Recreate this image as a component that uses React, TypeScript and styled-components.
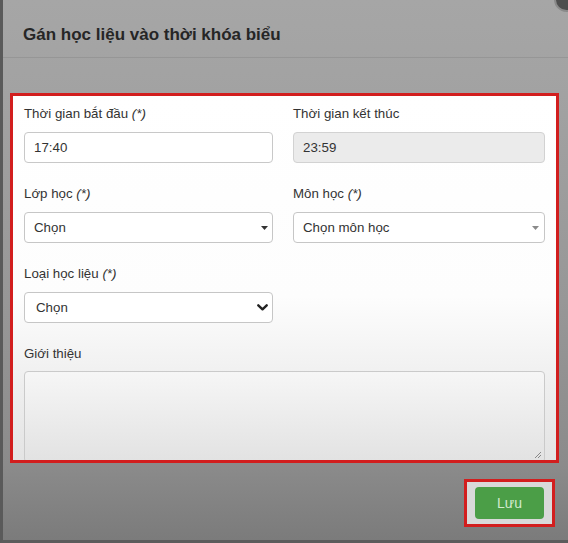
import React from "react";
import styled, { createGlobalStyle } from "styled-components";

const GlobalStyle = createGlobalStyle`
  html, body { margin: 0; padding: 0; }
  body { font-family: "Liberation Sans", Arial, sans-serif; background: #7b7b7b; }
  * { box-sizing: border-box; }
`;

const Frame = styled.div`
  position: relative;
  width: 568px;
  height: 543px;
  overflow: hidden;
  display: flex;
  flex-direction: column;
  border-left: 3px solid #5a5a5a;
  border-bottom: 3px solid #5c5c5c;
  background: linear-gradient(
    to bottom,
    #a6a6a6 0px,
    #a2a2a2 95px,
    #979797 300px,
    #8b8b8b 465px,
    #7b7b7b 540px
  );
`;

const CloseDot = styled.div`
  position: absolute;
  top: -13px;
  right: -11px;
  width: 25px;
  height: 25px;
  border-radius: 50%;
  background: #4e4e4e;
  border: 2px solid #8a8a8a;
`;

const Header = styled.div`
  height: 58px;
  padding: 25px 0 0 20px;
  border-bottom: 1px solid #969696;
`;

const Title = styled.h4`
  margin: 0;
  font-size: 17px;
  line-height: 20px;
  font-weight: bold;
  color: #262626;
`;

const Body = styled.div`
  padding: 35px 9px 0 7px;
`;

const FormBox = styled.div`
  height: 370px;
  border: 3px solid #d21e1e;
  overflow: hidden;
  padding: 8px 11px 0 11px;
  background: linear-gradient(
    to bottom,
    #ffffff 0%,
    #fdfdfd 55%,
    #eeeeee 80%,
    #e4e4e4 100%
  );
  display: grid;
  grid-template-columns: 249px 252px;
  column-gap: 20px;
  align-content: start;
`;

const Field = styled.div<{ $wide?: boolean }>`
  display: flex;
  flex-direction: column;
  margin-bottom: 21px;
  grid-column: ${(p) => (p.$wide ? "1 / span 2" : "auto")};
`;

const Label = styled.label`
  display: block;
  height: 20px;
  line-height: 20px;
  margin-bottom: 8px;
  font-size: 13.3px;
  color: #333;

  em {
    font-style: italic;
  }
`;

const TextInput = styled.div<{ $disabled?: boolean }>`
  height: 31px;
  display: flex;
  align-items: center;
  padding: 0 9px;
  border: 1px solid ${(p) => (p.$disabled ? "#d2d2d2" : "#c8c8c8")};
  border-radius: 4px;
  background: ${(p) => (p.$disabled ? "#ebebeb" : "#ffffff")};
  font-size: 13.3px;
  color: #333;
`;

const SelectBox = styled.div<{ $pad: number; $right: number }>`
  height: 31px;
  display: flex;
  align-items: center;
  justify-content: space-between;
  padding: 0 ${(p) => p.$right}px 0 ${(p) => p.$pad}px;
  border: 1px solid #c6c6c6;
  border-radius: 4px;
  background: #ffffff;
  font-size: 13.3px;
  color: #333;
`;

const TextArea = styled.div`
  position: relative;
  height: 92px;
  margin-top: -1px;
  border: 1px solid #cacaca;
  border-radius: 4px;
  background: linear-gradient(to bottom, #f6f6f6 0%, #eaeaea 60%, #e2e2e2 100%);
`;

const Grip = styled.svg`
  position: absolute;
  right: 2px;
  bottom: 3px;
`;

const Footer = styled.div`
  display: flex;
  justify-content: flex-end;
  padding: 16px 13px 0 0;
`;

const SaveFrame = styled.div`
  border: 3px solid #d21e1e;
  background: #d9d9d9;
  padding: 5px 8px 5px 8px;
`;

const SaveButton = styled.button`
  width: 69px;
  height: 32px;
  border: none;
  border-radius: 4px;
  background: #4b9e47;
  color: #d3ebcf;
  font-family: "Liberation Sans", Arial, sans-serif;
  font-size: 14px;
  padding: 0;
`;

const Caret = ({ color }: { color: string }) => (
  <svg width="7" height="4" viewBox="0 0 7 4">
    <path d="M0 0 L7 0 L3.5 4 Z" fill={color} />
  </svg>
);

const Chevron = () => (
  <svg width="11" height="7" viewBox="0 0 11 7">
    <path
      d="M1.3 1.3 L5.5 5.3 L9.7 1.3"
      fill="none"
      stroke="#222"
      strokeWidth="2.4"
      strokeLinecap="round"
      strokeLinejoin="round"
    />
  </svg>
);

export default function App() {
  return (
    <>
      <GlobalStyle />
      <Frame>
        <CloseDot />
        <Header>
          <Title>Gán học liệu vào thời khóa biểu</Title>
        </Header>
        <Body>
          <FormBox>
            <Field>
              <Label>
                Thời gian bắt đầu <em>(*)</em>
              </Label>
              <TextInput>17:40</TextInput>
            </Field>
            <Field>
              <Label>Thời gian kết thúc</Label>
              <TextInput $disabled>23:59</TextInput>
            </Field>
            <Field>
              <Label>
                Lớp học <em>(*)</em>
              </Label>
              <SelectBox $pad={9} $right={4}>
                <span>Chọn</span>
                <Caret color="#333" />
              </SelectBox>
            </Field>
            <Field>
              <Label>
                Môn học <em>(*)</em>
              </Label>
              <SelectBox $pad={9} $right={5}>
                <span>Chọn môn học</span>
                <Caret color="#8a8a8a" />
              </SelectBox>
            </Field>
            <Field>
              <Label>
                Loại học liệu <em>(*)</em>
              </Label>
              <SelectBox $pad={11} $right={4}>
                <span>Chọn</span>
                <Chevron />
              </SelectBox>
            </Field>
            <Field />
            <Field $wide>
              <Label>Giới thiệu</Label>
              <TextArea>
                <Grip width="8" height="8" viewBox="0 0 8 8">
                  <path d="M1 7 L7 1 M4 7 L7 4" stroke="#888" strokeWidth="1" />
                </Grip>
              </TextArea>
            </Field>
          </FormBox>
        </Body>
        <Footer>
          <SaveFrame>
            <SaveButton>Lưu</SaveButton>
          </SaveFrame>
        </Footer>
      </Frame>
    </>
  );
}
